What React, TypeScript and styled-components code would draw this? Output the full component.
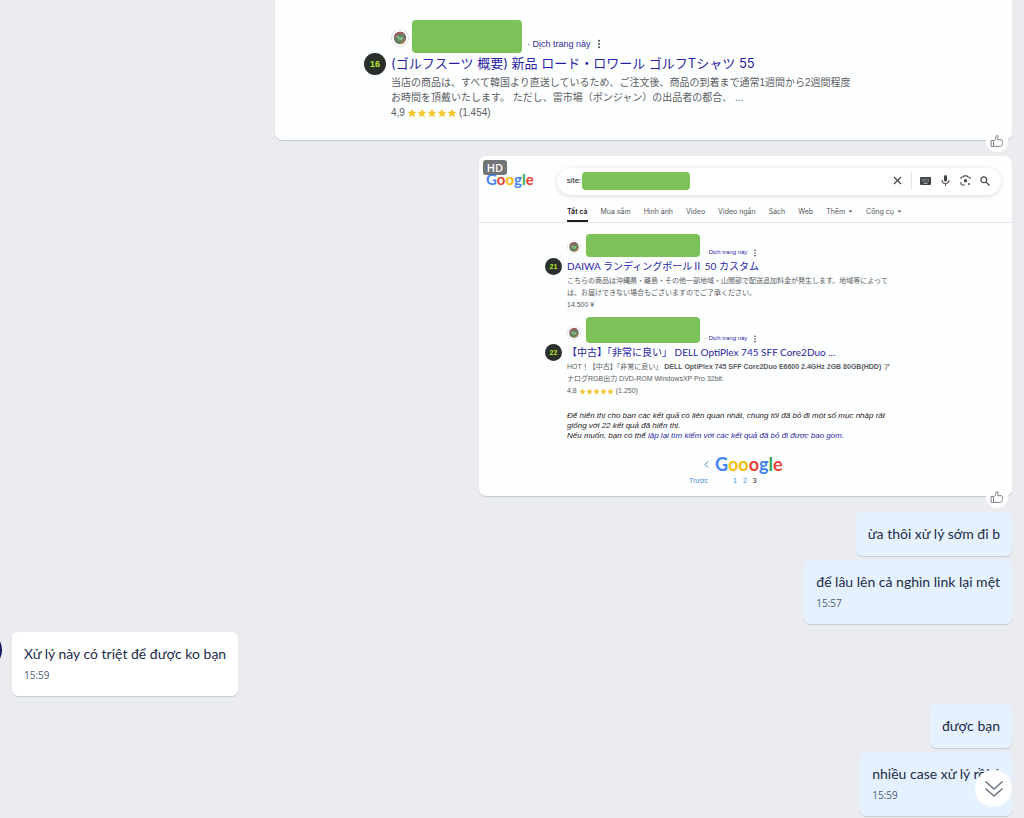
import React from 'react';
import styled, { createGlobalStyle } from 'styled-components';

const Global = createGlobalStyle`
  * { box-sizing: border-box; }
  body { margin: 0; background: #ebecf0; font-family: Lato, "Noto Sans", sans-serif; }
  h3, p { margin: 0; font-weight: 400; }
  button { border: 0; padding: 0; margin: 0; background: none; font: inherit; color: inherit; cursor: pointer; }
  a { color: inherit; text-decoration: none; }
`;

const Chat = styled.main`
  position: relative;
  min-height: 100vh;
  overflow: hidden;
  display: flex;
  flex-direction: column;
  align-items: flex-end;
  gap: 4px;
  padding: 0 12px 2px;
`;

const Picture = styled.article<{ $wide?: boolean }>`
  position: relative;
  width: ${p => (p.$wide ? '74%' : '54%')};
  max-width: ${p => (p.$wide ? '737px' : '533px')};
  margin-bottom: 12px;
  background: #fdfefe;
  border-radius: ${p => (p.$wide ? '0 0 7px 7px' : '7px')};
  box-shadow: 0 1px 1px #c3c8d1;
  font-family: "Liberation Sans", "Noto Sans CJK JP", sans-serif;
  color: #5a5d62;
`;

const Like = styled.button`
  position: absolute;
  right: 4px;
  bottom: -12px;
  width: 22px;
  height: 22px;
  border-radius: 50%;
  background: #fff;
  display: grid;
  place-items: center;
`;

const FirstBody = styled.div`
  padding: 20px 0;
`;

const Results = styled.div`
  display: grid;
  gap: 6px;
  padding-top: 8px;
`;

const Result = styled.section<{ $large?: boolean }>`
  display: grid;
  grid-template-columns: 22px 1fr;
  column-gap: ${p => (p.$large ? '5px' : '0')};
  padding-left: ${p => (p.$large ? '89px' : '66px')};
`;

const Source = styled.div<{ $large?: boolean }>`
  grid-column: 2;
  display: flex;
  align-items: flex-end;
  gap: ${p => (p.$large ? '3px' : '5px')};
  height: ${p => (p.$large ? '33px' : '26px')};
`;

const Redacted = styled.span<{ $w: number; $h: number }>`
  flex: none;
  width: ${p => p.$w}px;
  height: ${p => p.$h}px;
  border-radius: 4px;
  background: #7dc159;
`;

const Translate = styled.a<{ $large?: boolean }>`
  display: flex;
  align-items: center;
  gap: 6px;
  margin-left: ${p => (p.$large ? '2px' : '0')};
  font-size: ${p => (p.$large ? '9px' : '6px')};
  line-height: ${p => (p.$large ? '18px' : '9px')};
  color: #2c2aa0;
  white-space: nowrap;
`;

const Favicon = styled.svg<{ $large?: boolean }>`
  flex: none;
  width: ${p => (p.$large ? '18px' : '14px')};
  height: ${p => (p.$large ? '18px' : '14px')};
  margin-bottom: ${p => (p.$large ? '6px' : '3px')};
`;

const Rank = styled.span<{ $large?: boolean }>`
  width: ${p => (p.$large ? '22px' : '17px')};
  height: ${p => (p.$large ? '22px' : '17px')};
  border-radius: 50%;
  background: #2a2f2c;
  color: #b5e82c;
  font-weight: 700;
  font-size: ${p => (p.$large ? '9px' : '7px')};
  display: grid;
  place-items: center;
  align-self: center;
  justify-self: ${p => (p.$large ? 'end' : 'start')};
`;

const Title = styled.h3<{ $large?: boolean }>`
  font-family: ${p => (p.$large ? 'Inter' : 'Lato')}, "Noto Sans CJK JP", sans-serif;
  font-size: ${p => (p.$large ? '13px' : '10px')};
  line-height: ${p => (p.$large ? '20px' : '18px')};
  color: #2a1fa5;
  white-space: nowrap;
`;

const Snippet = styled.p<{ $large?: boolean }>`
  grid-column: 2;
  font-size: ${p => (p.$large ? '10px' : '7px')};
  line-height: ${p => (p.$large ? '15px' : '12px')};
  white-space: nowrap;
  display: flex;
  align-items: center;
  gap: 2px;
`;

const Hd = styled.span`
  position: absolute;
  left: 4px;
  top: 4px;
  width: 24px;
  height: 15px;
  border-radius: 3px;
  background: rgba(88, 92, 96, 0.85);
  color: #fff;
  font: 600 11px/15px "Open Sans", sans-serif;
  text-align: center;
`;

const Header = styled.header`
  display: flex;
  align-items: flex-start;
  padding: 12px 11px 0 7px;
`;

const Logo = styled.span<{ $size: number }>`
  font-family: Lato, Inter, sans-serif;
  font-weight: 700;
  font-size: ${p => p.$size}px;
  line-height: 22px;
`;

const LogoLetter = styled.span<{ $c: string }>`
  color: ${p => p.$c};
`;

const Search = styled.form`
  flex: 1;
  margin-left: 23px;
  height: 27px;
  border-radius: 14px;
  background: #fff;
  box-shadow: 0 1px 4px #d4d6dc;
  display: flex;
  align-items: center;
  padding: 0 10px 2px;
`;

const Query = styled.input`
  width: 15px;
  padding: 0;
  border: 0;
  outline: 0;
  background: transparent;
  font: 8px "Liberation Sans", sans-serif;
  color: #222;
`;

const Tools = styled.div`
  margin-left: auto;
  display: flex;
  align-items: center;
  gap: 8px;
  button { width: 12px; height: 16px; display: grid; place-items: center; }
`;

const Divider = styled.span`
  width: 1px;
  height: 18px;
  margin-right: -1px;
  background: #e3e5e8;
`;

const Tabs = styled.nav`
  display: flex;
  gap: 13px;
  height: 28px;
  padding-left: 88px;
  border-bottom: 1px solid #e7e8ec;
`;

const Tab = styled.a<{ $active?: boolean }>`
  display: flex;
  align-items: center;
  gap: 3px;
  font-family: Inter, sans-serif;
  font-size: 7px;
  font-weight: ${p => (p.$active ? 600 : 400)};
  color: ${p => (p.$active ? '#1f2023' : '#55585c')};
  border-bottom: 2px solid ${p => (p.$active ? '#1f2023' : 'transparent')};
  padding-top: 8px;
  white-space: nowrap;
`;

const Note = styled.p`
  padding: 14px 0 0 88px;
  font-size: 8px;
  font-style: italic;
  line-height: 10px;
  color: #1f2023;
  white-space: nowrap;
  a { color: #2a1fa5; }
`;

const Pager = styled.nav`
  display: grid;
  grid-template-columns: 26px 74px;
  padding: 12px 0 9px 210px;
  font-size: 7px;
  line-height: 12px;
  color: #4a8fd8;
`;

const Pages = styled.div`
  display: flex;
  gap: 6px;
  padding-left: 18px;
`;

const Current = styled.span`
  color: #1f2023;
`;

const Previous = styled.a`
  display: grid;
  place-items: center end;
  padding-right: 6px;
`;

const Bubble = styled.div<{ $received?: boolean; $spaced?: boolean }>`
  align-self: ${p => (p.$received ? 'flex-start' : 'flex-end')};
  margin-bottom: ${p => (p.$spaced ? '4px' : '0')};
  padding: 11px 12px;
  border-radius: 6px;
  background: ${p => (p.$received ? '#fff' : '#e5f1ff')};
  box-shadow: 0 1px 1px #c3cbd6;
  color: #1c2b4a;
  font-size: 14px;
  line-height: 22px;
  white-space: nowrap;
`;

const Time = styled.time`
  display: block;
  margin: 3px 0 2px;
  font-family: "Open Sans", sans-serif;
  font-size: 10px;
  line-height: 15px;
  color: #4f5c74;
`;

const Avatar = styled.span`
  position: absolute;
  left: -36px;
  top: 631px;
  width: 38px;
  height: 38px;
  border-radius: 50%;
  background: #14145a;
`;

const ToBottom = styled.button`
  position: absolute;
  right: 12px;
  bottom: 11px;
  width: 37px;
  height: 37px;
  border-radius: 50%;
  background: #fff;
  display: grid;
  place-items: center;
`;

function GoogleLogo({ text, size }: { text: string; size: number }) {
  const colors = text.length > 6
    ? ['#4285f4', '#fbbc05', '#fbbc05', '#ea4335', '#4285f4', '#34a853', '#ea4335']
    : ['#4285f4', '#ea4335', '#fbbc05', '#4285f4', '#34a853', '#ea4335'];
  return (
    <Logo $size={size}>
      {text.split('').map((ch, i) => <LogoLetter key={i} $c={colors[i]}>{ch}</LogoLetter>)}
    </Logo>
  );
}

function SiteIcon({ large }: { large?: boolean }) {
  return (
    <Favicon $large={large} viewBox="0 0 18 18" aria-hidden="true">
      <circle cx="9" cy="9" r="8.5" fill="#fff" stroke="#e3dfe6" />
      <circle cx="9" cy="9" r="6.200" fill="#6b7a62" />
      <path d="M4 7.500a5.500 5.500 0 0 1 8.500-3" stroke="#a8525a" strokeWidth="1.600" fill="none" />
      <path d="M6 9.500l3-2.500 2.500 1.500-1 3-3 .5z" fill="#5fae62" />
      <path d="M5.500 7.500l2.500 1M9.500 10.500l2.500-2" stroke="#e6e2d8" strokeWidth="1" fill="none" />
      <path d="M14 10a5.200 5.200 0 0 1-5 4.500" stroke="#b5834e" strokeWidth="1.400" fill="none" />
    </Favicon>
  );
}

function Dots({ size }: { size: number }) {
  return (
    <svg width="4" height={size} viewBox="0 0 4 12" aria-hidden="true">
      <g fill="#45484d"><circle cx="2" cy="2" r="1.200" /><circle cx="2" cy="6" r="1.200" /><circle cx="2" cy="10" r="1.200" /></g>
    </svg>
  );
}

function Stars({ size }: { size: number }) {
  return (
    <svg width={size * 5} height={size} viewBox="0 0 50 10" role="img" aria-label="5 sao">
      {[0, 10, 20, 30, 40].map(x => (
        <path key={x} transform={`translate(${x} 0)`} fill="#f3c531" d="M5 .7l1.300 2.900 3.100.3-2.300 2.100.7 3.200L5 7.600 2.200 9.200l.7-3.200L.6 3.900l3.100-.3z" />
      ))}
    </svg>
  );
}

function Thumb() {
  return (
    <Like aria-label="Thích">
      <svg width="14" height="14" viewBox="0 0 14 14" fill="none" stroke="#7d828b" strokeLinejoin="round" strokeLinecap="round">
        <path d="M1.500 6.500h2v6h-2zM3.500 7C5 6.200 6 4.600 6 2.700 6 1.200 8 .9 8.100 2.700c0 1.100-.3 2-.6 3h3.800c1.400 0 1.600 1.300.9 1.800.8.500.6 1.500-.1 1.800.5.600.3 1.400-.4 1.600.2.900-.3 1.500-1.200 1.500H6c-1 0-1.500-.5-2.500-.6" />
      </svg>
    </Like>
  );
}

const tabs = ['Tất cả', 'Mua sắm', 'Hình ảnh', 'Video', 'Video ngắn', 'Sách', 'Web', 'Thêm', 'Công cụ'];

export default function App() {
  return (
    <>
      <Global />
      <Chat>
        <Picture $wide>
          <FirstBody>
            <Result $large>
              <Source $large>
                <SiteIcon large />
                <Redacted $w={110} $h={33} />
                <Translate $large href="#">· Dịch trang này <Dots size={10} /></Translate>
              </Source>
              <Rank $large>16</Rank>
              <Title $large><a href="#">(ゴルフスーツ 概要) 新品 ロード・ロワール ゴルフTシャツ 55</a></Title>
              <Snippet $large>当店の商品は、すべて韓国より直送しているため、ご注文後、商品の到着まで通常1週間から2週間程度</Snippet>
              <Snippet $large>お時間を頂戴いたします。 ただし、雷市場（ポンジャン）の出品者の都合、 ...</Snippet>
              <Snippet $large>4,9 <Stars size={10} /> (1.454)</Snippet>
            </Result>
          </FirstBody>
          <Thumb />
        </Picture>

        <Picture>
          <Header>
            <GoogleLogo text="Google" size={15} />
            <Search onSubmit={e => e.preventDefault()}>
              <Query aria-label="Tìm kiếm" defaultValue="site:" />
              <Redacted $w={108} $h={18} />
              <Tools>
                <button type="button" aria-label="Xóa">
                  <svg width="9" height="9" viewBox="0 0 9 9"><path d="M1 1l7 7M8 1L1 8" stroke="#45484d" strokeWidth="1.200" /></svg>
                </button>
                <Divider />
                <button type="button" aria-label="Bàn phím">
                  <svg width="11" height="8" viewBox="0 0 11 8"><rect width="11" height="8" rx="1" fill="#3c3f44" /><path d="M1.500 2.200h8M1.500 4h8" stroke="#c4c6ca" strokeWidth=".8" strokeDasharray="1 .6" /><path d="M3.500 6.200h4" stroke="#c4c6ca" /></svg>
                </button>
                <button type="button" aria-label="Giọng nói">
                  <svg width="9" height="11" viewBox="0 0 9 11"><rect x="3" y="0" width="3" height="6.500" rx="1.500" fill="#3c3f44" /><path d="M1 5a3.500 3.500 0 0 0 7 0M4.500 8.500V11" stroke="#5a4a50" strokeWidth="1.100" fill="none" /></svg>
                </button>
                <button type="button" aria-label="Ống kính">
                  <svg width="11" height="11" viewBox="0 0 11 11" fill="none" stroke="#4b4f55" strokeWidth="1.200"><path d="M1 4V3.200Q1 2 2.200 2h1L4 .8h3L7.800 2h1Q10 2 10 3.200V4M1 7v1.500Q1 10 2.500 10H5" /><circle cx="5.500" cy="5.700" r="1.700" fill="#4b4f55" stroke="none" /><circle cx="9" cy="9" r="1" fill="#4b4f55" stroke="none" /></svg>
                </button>
                <button type="submit" aria-label="Tìm">
                  <svg width="10" height="10" viewBox="0 0 10 10" fill="none" stroke="#45484d" strokeWidth="1.300"><circle cx="3.800" cy="3.800" r="2.900" /><path d="M6 6l3.500 3.500" /></svg>
                </button>
              </Tools>
            </Search>
          </Header>
          <Hd>HD</Hd>
          <Tabs>
            {tabs.map((t, i) => (
              <Tab key={t} href="#" $active={i === 0}>
                {t}
                {i > 6 && <svg width="5" height="3" viewBox="0 0 5 3" aria-hidden="true"><path d="M.5.5h4l-2 2z" fill="#55585c" /></svg>}
              </Tab>
            ))}
          </Tabs>
          <Results>
            <Result>
              <Source>
                <SiteIcon />
                <Redacted $w={114} $h={23} />
                <Translate href="#">· Dịch trang này <Dots size={8} /></Translate>
              </Source>
              <Rank>21</Rank>
              <Title><a href="#">DAIWA ランディングポールⅡ 50 カスタム</a></Title>
              <Snippet>こちらの商品は沖縄県・離島・その他一部地域・山間部で配送追加料金が発生します。地域等によって</Snippet>
              <Snippet>は、お届けできない場合もございますのでご了承ください。</Snippet>
              <Snippet>14.500 ¥</Snippet>
            </Result>
            <Result>
              <Source>
                <SiteIcon />
                <Redacted $w={114} $h={26} />
                <Translate href="#">· Dịch trang này <Dots size={8} /></Translate>
              </Source>
              <Rank>22</Rank>
              <Title><a href="#">【中古】「非常に良い」 DELL OptiPlex 745 SFF Core2Duo ...</a></Title>
              <Snippet>HOT！【中古】「非常に良い」 <b>DELL OptiPlex 745 SFF Core2Duo E6600 2.4GHz 2GB 80GB(HDD)</b> ア</Snippet>
              <Snippet>ナログRGB出力 DVD-ROM WindowsXP Pro 32bit.</Snippet>
              <Snippet>4,8 <Stars size={7} /> (1.250)</Snippet>
            </Result>
          </Results>
          <Note>
            Để hiển thị cho bạn các kết quả có liên quan nhất, chúng tôi đã bỏ đi một số mục nhập rất<br />
            giống với 22 kết quả đã hiển thị.<br />
            Nếu muốn, bạn có thể <a href="#">lặp lại tìm kiếm với các kết quả đã bỏ đi được bao gồm.</a>
          </Note>
          <Pager aria-label="Trang">
            <Previous href="#" aria-label="Trang trước">
              <svg width="5" height="7" viewBox="0 0 5 7"><path d="M4 .5l-3 3 3 3" stroke="#4a7fc8" fill="none" /></svg>
            </Previous>
            <GoogleLogo text="Gooogle" size={18} />
            <a href="#">Trước</a>
            <Pages><a href="#">1</a><a href="#">2</a><Current>3</Current></Pages>
          </Pager>
          <Thumb />
        </Picture>

        <Bubble>ừa thôi xử lý sớm đi b</Bubble>
        <Bubble $spaced>để lâu lên cả nghìn link lại mệt<Time>15:57</Time></Bubble>
        <Bubble $received $spaced>Xử lý này có triệt để được ko bạn<Time>15:59</Time></Bubble>
        <Bubble>được bạn</Bubble>
        <Bubble>nhiều case xử lý rồi ý<Time>15:59</Time></Bubble>
        <Avatar />
        <ToBottom aria-label="Xuống cuối">
          <svg width="20" height="18" viewBox="0 0 20 18" fill="none" stroke="#6b7280" strokeWidth="1.500"><path d="M1.500 1.500l8.500 7.500 8.500-7.500M1.500 8.500l8.500 7.500 8.500-7.500" /></svg>
        </ToBottom>
      </Chat>
    </>
  );
}
